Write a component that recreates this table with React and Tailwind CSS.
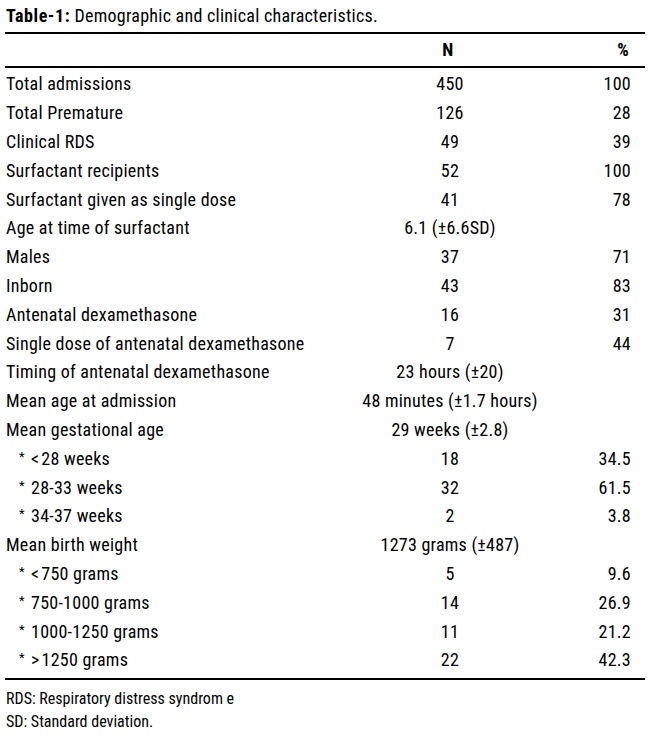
const rows = [
  ['Total admissions', '450', '100'],
  ['Total Premature', '126', '28'],
  ['Clinical RDS', '49', '39'],
  ['Surfactant recipients', '52', '100'],
  ['Surfactant given as single dose', '41', '78'],
  ['Age at time of surfactant', '6.1 (±6.6SD)', ''],
  ['Males', '37', '71'],
  ['Inborn', '43', '83'],
  ['Antenatal dexamethasone', '16', '31'],
  ['Single dose of antenatal dexamethasone', '7', '44'],
  ['Timing of antenatal dexamethasone', '23 hours (±20)', ''],
  ['Mean age at admission', '48 minutes (±1.7 hours)', ''],
  ['Mean gestational age', '29 weeks (±2.8)', ''],
  ['<28 weeks', '18', '34.5', true],
  ['28-33 weeks', '32', '61.5', true],
  ['34-37 weeks', '2', '3.8', true],
  ['Mean birth weight', '1273 grams (±487)', ''],
  ['<750 grams', '5', '9.6', true],
  ['750-1000 grams', '14', '26.9', true],
  ['1000-1250 grams', '11', '21.2', true],
  ['>1250 grams', '22', '42.3', true],
];

// sub rows: small raised asterisk, then the range
function Label({ text, sub }) {
  if (!sub) return <div className="pl-px whitespace-nowrap">{text}</div>;
  const sign = /^[<>]/.test(text) ? text[0] : null;
  return (
    <div className="pl-[14px] flex items-center whitespace-nowrap">
      <span className="text-[13px] leading-none -mt-[5px] w-[12px]">*</span>
      {sign && <span className="mr-[2px]">{sign}</span>}
      <span>{sign ? text.slice(1) : text}</span>
    </div>
  );
}

function Row({ label, n, pct, sub }) {
  return (
    <div className="grid grid-cols-[345px_200px_1fr] h-[28.8px] items-center">
      <Label text={label} sub={sub} />
      <div className="text-center whitespace-nowrap">{n}</div>
      <div className="text-right pr-[14px]">{pct}</div>
    </div>
  );
}

export default function App() {
  return (
    <div className="w-[650px] h-[740px] bg-white text-black px-[5px] pt-[3px] font-['Roboto_Condensed',_'DejaVu_Sans_Condensed',_sans-serif] text-[18px] leading-[26px] tracking-[0.25px]">
      <div className="pl-px h-[26px] whitespace-nowrap">
        <span className="font-bold tracking-[0.6px]">Table-1:</span> Demographic and clinical characteristics.
      </div>
      <div className="mt-[3px] border-t-2 border-black" />
      <div className="grid grid-cols-[345px_200px_1fr] h-[32px] items-center font-bold">
        <div />
        <div className="text-center pr-[4px]">N</div>
        <div className="text-right pr-[16px]">%</div>
      </div>
      <div className="border-t-2 border-black" />
      <div className="pt-[2px]">
        {rows.map((r) => (
          <Row key={r[0]} label={r[0]} n={r[1]} pct={r[2]} sub={r[3]} />
        ))}
      </div>
      <div className="mt-[3px] border-t-2 border-black" />
      <div className="pt-[7px] pl-px text-[16px] leading-[23px] tracking-normal">
        <div>RDS: Respiratory distress syndrom e</div>
        <div>SD: Standard deviation.</div>
      </div>
    </div>
  );
}
